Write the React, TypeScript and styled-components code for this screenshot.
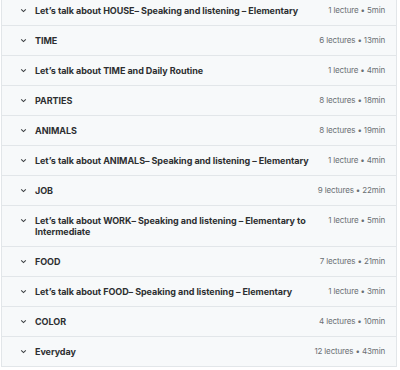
import React from "react"
import styled, { createGlobalStyle } from "styled-components"

const GlobalStyle = createGlobalStyle`
  html, body {
    margin: 0;
    padding: 0;
    background: #ffffff;
  }
  body {
    font-family: Inter, "Noto Sans", sans-serif;
    -webkit-font-smoothing: antialiased;
  }
`

const List = styled.div`
  margin: -4px 0 0 1px;
  width: 396px;
  border-left: 1px solid #e2e6e9;
  border-right: 1px solid #e2e6e9;
  box-sizing: border-box;
  background: #f7f9fa;
`

const Row = styled.div`
  display: flex;
  align-items: flex-start;
  padding: 9px 11px 9px 18px;
  border-bottom: 1px solid #e2e6e9;
  box-sizing: border-box;
`

const Chevron = styled.svg`
  flex: none;
  width: 7px;
  height: 7px;
  margin-top: 2px;
  margin-right: 8px;
`

const Title = styled.div`
  flex: 1;
  max-width: 282px;
  font-size: 9px;
  line-height: 11px;
  font-weight: 700;
  color: #2d2f31;
  letter-spacing: -0.05px;
`

const Meta = styled.div`
  margin-left: auto;
  font-size: 8px;
  line-height: 11px;
  color: #6a6f73;
  white-space: nowrap;
  letter-spacing: -0.15px;
`

const sections = [
  ["Let’s talk about HOUSE– Speaking and listening – Elementary", "1 lecture • 5min"],
  ["TIME", "6 lectures • 13min"],
  ["Let’s talk about TIME and Daily Routine", "1 lecture • 4min"],
  ["PARTIES", "8 lectures • 18min"],
  ["ANIMALS", "8 lectures • 19min"],
  ["Let’s talk about ANIMALS– Speaking and listening – Elementary", "1 lecture • 4min"],
  ["JOB", "9 lectures • 22min"],
  ["Let’s talk about WORK– Speaking and listening – Elementary to Intermediate", "1 lecture • 5min"],
  ["FOOD", "7 lectures • 21min"],
  ["Let’s talk about FOOD– Speaking and listening – Elementary", "1 lecture • 3min"],
  ["COLOR", "4 lectures • 10min"],
  ["Everyday", "12 lectures • 43min"],
]

const Section = ({ title, meta }: { title: string; meta: string }) => {
  return (
    <Row>
      <Chevron viewBox="0 0 7 7">
        <path d="M1.2 2.4 L3.5 4.6 L5.8 2.4" fill="none" stroke="#3d4043" strokeWidth="1.1" />
      </Chevron>
      <Title>{title}</Title>
      <Meta>{meta}</Meta>
    </Row>
  )
}

const App = () => {
  return (
    <>
      <GlobalStyle />
      <List>
        {sections.map(([title, meta]) => (
          <Section key={title} title={title} meta={meta} />
        ))}
      </List>
    </>
  )
}

export default App
